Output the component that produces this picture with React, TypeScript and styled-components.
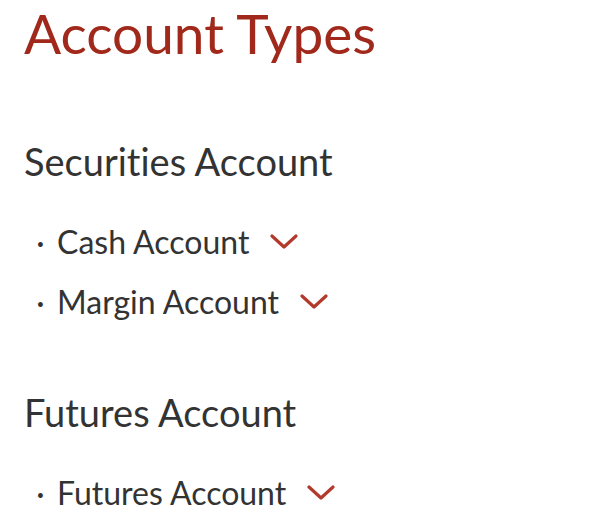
import React from 'react';
import styled, { createGlobalStyle } from 'styled-components';

const GlobalStyle = createGlobalStyle`
  html, body {
    margin: 0;
    padding: 0;
    background: #ffffff;
  }
  body {
    font-family: Lato, "Open Sans", sans-serif;
    font-variant-ligatures: none;
  }
`;

const Page = styled.div`
  padding: 0 24px;
`;

const Title = styled.h1`
  margin: 0;
  padding-top: 3px;
  font-size: 55px;
  font-weight: 400;
  line-height: 60px;
  color: #a1291b;
`;

const Section = styled.section`
  margin-top: 76px;

  & + & {
    margin-top: 66px;
  }
`;

const SectionTitle = styled.h2`
  margin: 0 0 37px;
  font-size: 38px;
  font-weight: 400;
  line-height: 44px;
  color: #333333;
`;

const List = styled.ul`
  list-style: none;
  margin: 0;
  padding: 0;
  display: flex;
  flex-direction: column;
  gap: 16px;
`;

const Item = styled.li`
  display: flex;
  align-items: center;
  gap: 21px;
  font-size: 32px;
  line-height: 44px;
  color: #333333;
`;

const Label = styled.span`
  &::before {
    content: '·';
    display: inline-block;
    width: 33px;
    text-align: center;
  }
`;

const Chevron: React.FC = () => (
  <svg width="28" height="16" viewBox="0 0 28 16" aria-hidden="true">
    <path d="M2 2 L14 13 L26 2" fill="none" stroke="#b23a2c" strokeWidth="3.2" strokeLinecap="round" strokeLinejoin="round" />
  </svg>
);

const sections = [
  { title: 'Securities Account', items: ['Cash Account', 'Margin Account'] },
  { title: 'Futures Account', items: ['Futures Account'] },
];

const App: React.FC = () => (
  <Page>
    <GlobalStyle />
    <Title>Account Types</Title>
    {sections.map((s) => (
      <Section key={s.title}>
        <SectionTitle>{s.title}</SectionTitle>
        <List>
          {s.items.map((item) => (
            <Item key={item}>
              <Label>{item}</Label>
              <Chevron />
            </Item>
          ))}
        </List>
      </Section>
    ))}
  </Page>
);

export default App;
